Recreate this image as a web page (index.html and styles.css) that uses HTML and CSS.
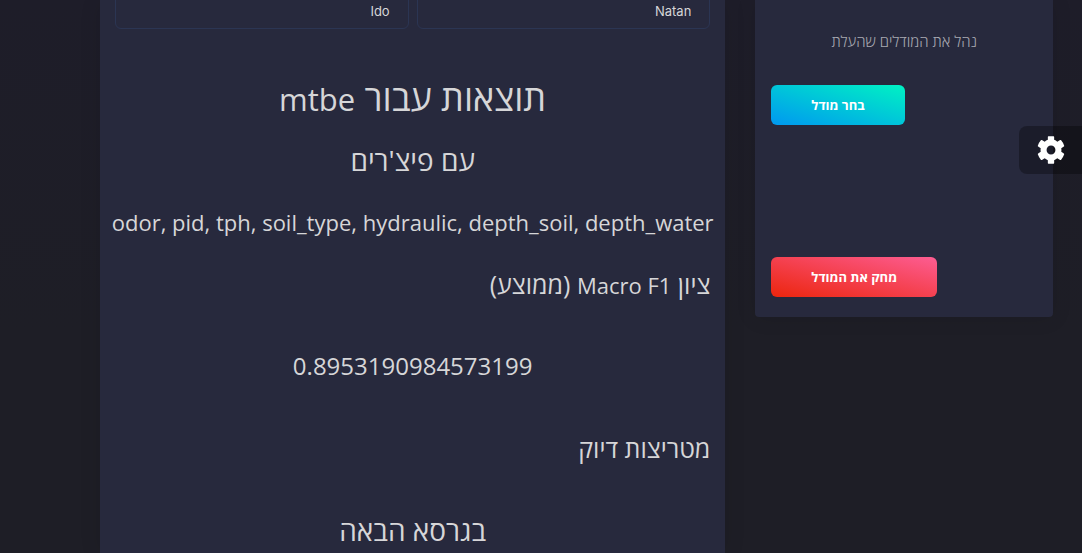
FILE: index.html
```html
<!DOCTYPE html>
<html lang="he">
<head>
<meta charset="utf-8">
<meta name="viewport" content="width=device-width, initial-scale=1">
<title>mtbe</title>
<link rel="stylesheet" href="styles.css">
</head>
<body>
<div class="content">
  <main class="card results">
    <div class="fields">
      <input class="field" type="text" dir="rtl" value="Ido" aria-label="שם משפחה">
      <input class="field" type="text" dir="rtl" value="Natan" aria-label="שם פרטי">
    </div>
    <h1 class="title" dir="rtl">תוצאות עבור <span class="title-name">mtbe</span></h1>
    <h2 class="subtitle" dir="rtl">עם פיצ'רים</h2>
    <p class="line features">odor, pid, tph, soil_type, hydraulic, depth_soil, depth_water</p>
    <h3 class="line" dir="rtl">ציון <span class="metric">Macro F1</span> (ממוצע)</h3>
    <p class="value">0.8953190984573199</p>
    <h3 class="line" dir="rtl">מטריצות דיוק</h3>
    <p class="value next" dir="rtl">בגרסא הבאה</p>
  </main>
  <aside class="card manage">
    <p class="hint" dir="rtl">נהל את המודלים שהעלת</p>
    <button class="btn btn-primary" type="button" dir="rtl">בחר מודל</button>
    <button class="btn btn-danger" type="button" dir="rtl">מחק את המודל</button>
  </aside>
</div>
<button class="settings" type="button" aria-label="הגדרות">
  <svg class="gear" viewBox="0 0 24 24" aria-hidden="true"><path fill="currentColor" fill-rule="evenodd" d="M9.300 0.800Q9.300 0.300 9.800 0.300H14.200Q14.700 0.300 14.700 0.800V3.300Q16.200 3.800 17.400 4.900L19.800 3.500Q20.300 3.300 20.700 3.700Q22.500 5.800 23.300 8.300Q23.400 8.800 23 9.100L20.800 10.400Q21.100 12 20.800 13.600L23 14.900Q23.400 15.200 23.300 15.700Q22.500 18.200 20.700 20.300Q20.300 20.700 19.800 20.500L17.400 19.100Q16.200 20.200 14.700 20.700V23.200Q14.700 23.700 14.200 23.700H9.800Q9.300 23.700 9.300 23.200V20.700Q7.800 20.200 6.600 19.100L4.200 20.500Q3.700 20.700 3.300 20.300Q1.500 18.200 0.700 15.700Q0.600 15.200 1 14.900L3.200 13.600Q2.900 12 3.200 10.400L1 9.100Q0.600 8.800 0.700 8.300Q1.500 5.800 3.300 3.700Q3.700 3.300 4.200 3.500L6.600 4.900Q7.800 3.800 9.300 3.300ZM12 8.200A3.800 3.800 0 1 0 12 15.800A3.800 3.800 0 1 0 12 8.200Z"/></svg>
</button>
</body>
</html>
```
FILE: styles.css
```css
* { box-sizing: border-box; }
body {
  margin: 0;
  overflow: hidden;
  min-height: 100vh;
  background: linear-gradient(#1e1d29, #1e1e26 60%);
  color: #d6d6d8;
  font-family: "Open Sans", "Noto Sans", sans-serif;
}
h1, h2, h3, p { margin: 0; font-weight: 400; }
.content {
  display: flex;
  align-items: flex-start;
  gap: 30px;
  padding: 0 29px 0 100px;
}
.card {
  background: #27293d;
  box-shadow: 0 1px 20px rgba(0, 0, 0, .1);
}
.results {
  flex: 0 0 calc((100% + 30px) * 2 / 3 - 30px);
  min-height: 100vh;
  padding: 0 15px;
  min-width: 0;
}
.fields {
  display: grid;
  grid-template-columns: 1fr 1fr;
  gap: 8px;
  margin-top: -9px;
  margin-bottom: 44px;
}
.field {
  width: 100%;
  height: 38px;
  padding: 2px 18px 0;
  border: 1px solid #2b3553;
  border-radius: 6px;
  background: transparent;
  color: #d6d6d8;
  font: 13px Inter, sans-serif;
}
.title {
  font-size: 36px;
  line-height: 50px;
  text-align: center;
}
.title-name {
  font-size: 31px;
  line-height: 1;
}
.subtitle {
  margin-top: 17px;
  font-size: 28px;
  line-height: 40px;
  text-align: center;
}
.line {
  margin-top: 22px;
  font-size: 25px;
  line-height: 40px;
}
.metric {
  font-size: 22px;
  line-height: 1;
}
.features {
  display: flex;
  justify-content: center;
  font-size: 22px;
  white-space: nowrap;
}
.value {
  margin: 42px 0;
  font-size: 24px;
  line-height: 40px;
  text-align: center;
}
.next {
  margin-bottom: 0;
  font-size: 28px;
}
.manage {
  flex: 1;
  display: flex;
  flex-direction: column;
  align-items: flex-start;
  padding: 29px 16px 20px;
  border-radius: 0 0 4px 4px;
}
.hint {
  align-self: stretch;
  margin-bottom: 32px;
  color: #a9a9b2;
  font-size: 15px;
  font-weight: 300;
  line-height: 24px;
  text-align: center;
}
.btn {
  height: 40px;
  padding: 0 40px;
  border: 0;
  border-radius: 6px;
  color: #fff;
  font: 700 13px "Open Sans", "Noto Sans", sans-serif;
  white-space: nowrap;
}
.btn-primary {
  margin-bottom: 132px;
  background: linear-gradient(to bottom left, #00f2c3, #0098f0);
}
.btn-danger { background: linear-gradient(to bottom left, #fd5d93, #ec250d); }
.settings {
  position: fixed;
  top: 126px;
  right: 0;
  width: 63px;
  height: 48px;
  padding: 0 0 0 1px;
  border: 0;
  border-radius: 8px 0 0 8px;
  background: rgba(0, 0, 0, .3);
  color: #fff;
}
.gear {
  display: block;
  width: 28px;
  height: 28px;
  margin: 0 auto;
}
```
